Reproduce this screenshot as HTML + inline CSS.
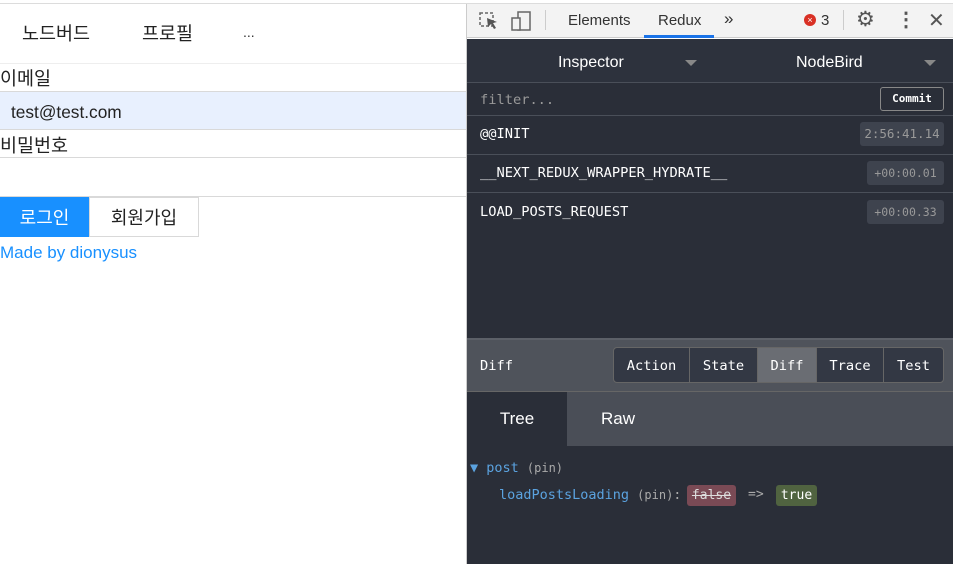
<!DOCTYPE html>
<html><head><meta charset="utf-8"><style>
*{margin:0;padding:0;box-sizing:border-box}
body{width:953px;height:564px;overflow:hidden;background:#fff;position:relative;font-family:"Liberation Sans","Noto Sans CJK KR",sans-serif}
.a{position:absolute}
.mono{font-family:"DejaVu Sans Mono","Liberation Mono",monospace}
.kr{font-size:18.5px;color:#222}
</style></head><body>
<div class="a" style="left:0;top:3px;width:953px;height:1px;background:#dcdcdc"></div>
<div class="a kr" style="left:22px;top:20px">노드버드</div>
<div class="a kr" style="left:142px;top:20px">프로필</div>
<div class="a" style="left:243px;top:24px;font-size:14px;color:#333">...</div>
<div class="a" style="left:0;top:63px;width:466px;height:1px;background:#eee"></div>
<div class="a kr" style="left:0;top:65px">이메일</div>
<div class="a" style="left:0;top:91px;width:466px;height:39px;background:#e8f0fe;border-top:1px solid #d9d9d9;border-bottom:1px solid #d9d9d9"></div>
<div class="a" style="left:11px;top:102px;font-size:17.3px;color:#222">test@test.com</div>
<div class="a kr" style="left:0;top:132px">비밀번호</div>
<div class="a" style="left:0;top:157px;width:466px;height:40px;border-top:1px solid #d9d9d9;border-bottom:1px solid #d9d9d9"></div>
<div class="a" style="left:0;top:197px;width:89px;height:40px;background:#1890ff;color:#fff;font-size:18px;text-align:center;line-height:42px">로그인</div>
<div class="a" style="left:89px;top:197px;width:110px;height:40px;border:1px solid #d9d9d9;color:#222;font-size:18px;text-align:center;line-height:40px">회원가입</div>
<div class="a" style="left:0;top:243px;color:#1890ff;font-size:17px">Made by dionysus</div>
<div class="a" style="left:466px;top:4px;width:1px;height:560px;background:#ccc"></div>
<div class="a" style="left:467px;top:4px;width:486px;height:34px;background:#f3f3f3;border-bottom:1px solid #ccc"></div>
<svg class="a" style="left:478px;top:10px" width="62" height="22"><rect x="2" y="3" width="13" height="13" fill="none" stroke="#666" stroke-width="1.5" stroke-dasharray="3 2"/><path d="M9 8 L19 12 L15 13 L18 18 L16 19 L13 14 L10 17Z" fill="#555"/><rect x="40" y="2" width="12" height="18" fill="none" stroke="#666" stroke-width="1.5"/><rect x="34" y="8" width="8" height="12" fill="#f3f3f3" stroke="#666" stroke-width="1.5"/></svg>
<div class="a" style="left:545px;top:10px;width:1px;height:20px;background:#ccc"></div>
<div class="a" style="left:568px;top:12px;font-size:15px;color:#333">Elements</div>
<div class="a" style="left:658px;top:12px;font-size:15px;color:#333">Redux</div>
<div class="a" style="left:644px;top:35px;width:70px;height:3px;background:#1a73e8"></div>
<div class="a" style="left:724px;top:9px;font-size:17px;color:#333">»</div>
<div class="a" style="left:804px;top:14px;width:12px;height:12px;border-radius:50%;background:#d93025;color:#fff;font-size:9px;text-align:center;line-height:12px">×</div>
<div class="a" style="left:821px;top:12px;font-size:15px;color:#333">3</div>
<div class="a" style="left:843px;top:10px;width:1px;height:20px;background:#ccc"></div>
<div class="a" style="left:856px;top:7px;font-size:21px;color:#555">⚙</div>
<div class="a" style="left:896px;top:7px;font-size:20px;color:#555;font-weight:bold">⋮</div>
<div class="a" style="left:928px;top:8px;font-size:20px;color:#555">✕</div>
<div class="a" style="left:467px;top:39px;width:486px;height:525px;background:#2a2e38"></div>
<div class="a" style="left:467px;top:39px;width:486px;height:44px;background:#2d323d;border-bottom:1px solid #4a4f59"></div>
<div class="a" style="left:558px;top:54px;font-size:16px;color:#fff">Inspector</div>
<div class="a" style="left:685px;top:60px;border:6px solid transparent;border-top:6px solid #888"></div>
<div class="a" style="left:796px;top:54px;font-size:16px;color:#fff">NodeBird</div>
<div class="a" style="left:924px;top:60px;border:6px solid transparent;border-top:6px solid #888"></div>
<div class="a mono" style="left:480px;top:92px;font-size:13.7px;color:#999">filter...</div>
<div class="a mono" style="left:880px;top:87px;width:64px;height:24px;border:1px solid #888;border-radius:3px;color:#fff;font-size:11px;text-align:center;line-height:22px;font-weight:bold">Commit</div>
<div class="a" style="left:467px;top:115px;width:486px;height:1px;background:#4a4f59"></div>
<div class="a mono" style="left:480px;top:126px;font-size:13.7px;color:#fff">@@INIT</div>
<div class="a mono" style="left:860px;top:122px;width:84px;height:24px;background:#3e434e;border-radius:3px;color:#999;font-size:12.5px;text-align:center;line-height:24px">2:56:41.14</div>
<div class="a" style="left:467px;top:154px;width:486px;height:1px;background:#4a4f59"></div>
<div class="a mono" style="left:480px;top:165px;font-size:13.7px;color:#fff">__NEXT_REDUX_WRAPPER_HYDRATE__</div>
<div class="a mono" style="left:867px;top:161px;width:77px;height:24px;background:#3e434e;border-radius:3px;color:#999;font-size:11.5px;text-align:center;line-height:24px">+00:00.01</div>
<div class="a" style="left:467px;top:192px;width:486px;height:1px;background:#4a4f59"></div>
<div class="a mono" style="left:480px;top:204px;font-size:13.7px;color:#fff">LOAD_POSTS_REQUEST</div>
<div class="a mono" style="left:867px;top:200px;width:77px;height:24px;background:#3e434e;border-radius:3px;color:#999;font-size:11.5px;text-align:center;line-height:24px">+00:00.33</div>
<div class="a" style="left:467px;top:338px;width:486px;height:54px;background:#4f535b;border-top:2px solid #5c6068;border-bottom:1px solid #666"></div>
<div class="a mono" style="left:480px;top:358px;font-size:13.7px;color:#fff">Diff</div>
<div class="a mono" style="left:613px;top:347px;width:331px;height:36px;border:1px solid #666;border-radius:4px;background:#333844;display:flex;color:#fff;font-size:13.7px;line-height:36px;overflow:hidden">
<div style="width:76px;text-align:center;border-right:1px solid #666">Action</div>
<div style="width:68px;text-align:center;border-right:1px solid #666">State</div>
<div style="width:59px;text-align:center;border-right:1px solid #666;background:#6a6d73">Diff</div>
<div style="width:67px;text-align:center;border-right:1px solid #666">Trace</div>
<div style="flex:1;text-align:center">Test</div></div>
<div class="a" style="left:467px;top:392px;width:486px;height:54px;background:#4a4e57"></div>
<div class="a" style="left:467px;top:392px;width:100px;height:54px;background:#2a2e38;color:#fff;font-size:17px;text-align:center;line-height:54px">Tree</div>
<div class="a" style="left:601px;top:392px;color:#fff;font-size:17px;line-height:54px">Raw</div>
<div class="a mono" style="left:470px;top:460px;font-size:13.5px;color:#5ba3e0">▼ post <span style="color:#aaa;font-size:12px">(pin)</span></div>
<div class="a mono" style="left:499px;top:487px;font-size:13.5px;color:#5ba3e0">loadPostsLoading <span style="color:#aaa;font-size:12px">(pin)</span><span style="color:#aaa">:</span></div>
<div class="a mono" style="left:687px;top:485px;width:49px;height:21px;background:#7a4a55;border-radius:3px;color:#ddd;font-size:13px;text-align:center;line-height:21px;text-decoration:line-through">false</div>
<div class="a mono" style="left:748px;top:487px;font-size:13px;color:#aaa">=&gt;</div>
<div class="a mono" style="left:776px;top:485px;width:41px;height:21px;background:#506340;border-radius:3px;color:#fff;font-size:13px;text-align:center;line-height:21px">true</div>
</body></html>
